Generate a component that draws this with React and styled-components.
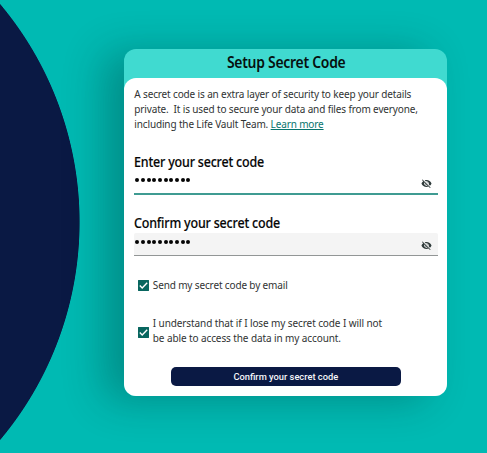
import { useState } from "react";
import styled, { createGlobalStyle } from "styled-components";
import { MdVisibilityOff } from "react-icons/md";

export default function App() {
    const [code, setCode] = useState("secretcode");
    const [confirm, setConfirm] = useState("secretcode");
    const [byEmail, setByEmail] = useState(true);
    const [understood, setUnderstood] = useState(true);

    return (
        <Page>
            <GlobalStyle />
            <Card>
                <Header>
                    <Title>Setup Secret Code</Title>
                </Header>
                <Body>
                    <Intro>
                        <Line>A secret code is an extra layer of security to keep your details</Line>
                        <Line>private.&nbsp; It is used to secure your data and files from everyone,</Line>
                        <Line>
                            including the Life Vault Team. <Link href="#">Learn more</Link>
                        </Line>
                    </Intro>

                    <SecretField label="Enter your secret code" value={code} onChange={setCode} active />
                    <SecretField label="Confirm your secret code" value={confirm} onChange={setConfirm} />

                    <Option>
                        <Check checked={byEmail} onChange={setByEmail} />
                        <Line>Send my secret code by email</Line>
                    </Option>
                    <Option $tall>
                        <Check checked={understood} onChange={setUnderstood} />
                        <div>
                            <Line $loose>I understand that if I lose my secret code I will not</Line>
                            <Line $loose>be able to access the data in my account.</Line>
                        </div>
                    </Option>

                    <Submit>Confirm your secret code</Submit>
                </Body>
            </Card>
        </Page>
    );
}

function SecretField({ label, value, onChange, active = false }) {
    const [visible, setVisible] = useState(false);

    return (
        <Field>
            <Label>{label}</Label>
            <InputRow $active={active}>
                {visible ? (
                    <Input value={value} onChange={(e) => onChange(e.target.value)} />
                ) : (
                    <Dots onClick={() => setVisible(true)}>
                        {value.split("").map((_, i) => (
                            <Dot key={i} />
                        ))}
                    </Dots>
                )}
                <EyeButton onClick={() => setVisible(!visible)}>
                    <MdVisibilityOff size={11} />
                </EyeButton>
            </InputRow>
        </Field>
    );
}

function Check({ checked, onChange }) {
    return (
        <Box role="checkbox" aria-checked={checked} $checked={checked} onClick={() => onChange(!checked)}>
            {checked && (
                <svg width="11" height="11" viewBox="0 0 11 11">
                    <path d="M1.8 5.6 L4.2 8 L9.2 2.8" fill="none" stroke="#fff" strokeWidth="1.4" />
                </svg>
            )}
        </Box>
    );
}

const GlobalStyle = createGlobalStyle`
    * {
        box-sizing: border-box;
    }

    body {
        margin: 0;
        overflow: hidden;
        font-family: "Noto Sans", sans-serif;
    }
`;

const Page = styled.div`
    width: 487px;
    height: 453px;
    padding: 48.5px 0 0 124.3px;
    background: radial-gradient(circle at -259px 222px, #0a1944 338.2px, #00bab3 339px);
`;

const Card = styled.div`
    width: 323px;
    height: 347px;
    display: flex;
    flex-direction: column;
    border-radius: 12px;
    background: #40dad0;
    box-shadow: -20px 4px 40px rgba(0, 35, 30, 0.29);
`;

const Header = styled.div`
    height: 29px;
    flex: none;
    display: flex;
    align-items: center;
    justify-content: center;
`;

const Title = styled.h1`
    margin: 0;
    padding-bottom: 2px;
    font-size: 15.8px;
    line-height: 27px;
    font-weight: 600;
    letter-spacing: -0.3px;
    color: #06100f;
    transform: scaleX(0.882);
`;

const Body = styled.div`
    flex: 1;
    padding: 9px 10px 0;
    border-radius: 12px;
    background: #fff;
`;

const Intro = styled.div`
    height: 66px;
`;

const Line = styled.div`
    font-size: 10px;
    line-height: 15.4px;
    letter-spacing: ${(p) => (p.$loose ? "-0.1px" : "-0.14px")};
    white-space: nowrap;
    color: #303333;
`;

const Link = styled.a`
    color: #08746d;
    text-decoration: underline;
`;

const Field = styled.div`
    height: 61.5px;
`;

const Label = styled.div`
    height: 19px;
    font-size: 14.4px;
    line-height: 18px;
    font-weight: 500;
    letter-spacing: -0.2px;
    white-space: nowrap;
    color: #050505;
    transform: scaleX(0.866);
    transform-origin: left;
    -webkit-text-stroke: 0.15px #050505;
`;

const InputRow = styled.div`
    width: 304px;
    height: 23px;
    display: flex;
    align-items: center;
    justify-content: space-between;
    padding: 0 6px 0 1px;
    border-radius: 2px 2px 0 0;
    border-bottom: ${(p) => (p.$active ? "2px solid #3f9b92" : "1.5px solid #929696")};
    background: ${(p) => (p.$active ? "#fff" : "#f4f4f4")};
`;

const Dots = styled.div`
    display: flex;
    gap: 1.7px;
    padding-bottom: 5px;
`;

const Dot = styled.span`
    width: 4px;
    height: 4px;
    border-radius: 50%;
    background: #050505;
`;

const Input = styled.input`
    border: 0;
    padding: 0;
    outline: 0;
    background: none;
    font: 10px "Noto Sans", sans-serif;
`;

const EyeButton = styled.button`
    display: flex;
    border: 0;
    padding: 2px 0 0;
    background: none;
    color: #303b3b;
    cursor: pointer;
`;

const Option = styled.label`
    height: ${(p) => (p.$tall ? "53px" : "38px")};
    display: flex;
    align-items: ${(p) => (p.$tall ? "center" : "flex-start")};
    gap: 3.5px;
    padding: ${(p) => (p.$tall ? "0 0 18px 4px" : "2.4px 0 0 4px")};
`;

const Box = styled.span`
    width: 11px;
    height: 11px;
    flex: none;
    display: flex;
    margin-top: 2px;
    border-radius: 1px;
    background: ${(p) => (p.$checked ? "#08665f" : "#fff")};
    box-shadow: inset 0 0 0 1px #08665f;
`;

const Submit = styled.button`
    width: 230px;
    height: 19px;
    display: block;
    margin: 0 0 0 36.5px;
    padding: 0;
    border: 0;
    border-radius: 5px;
    background: #0a1944;
    color: #f5f6fa;
    font: 500 9.3px/19px Roboto, sans-serif;
    cursor: pointer;
`;
